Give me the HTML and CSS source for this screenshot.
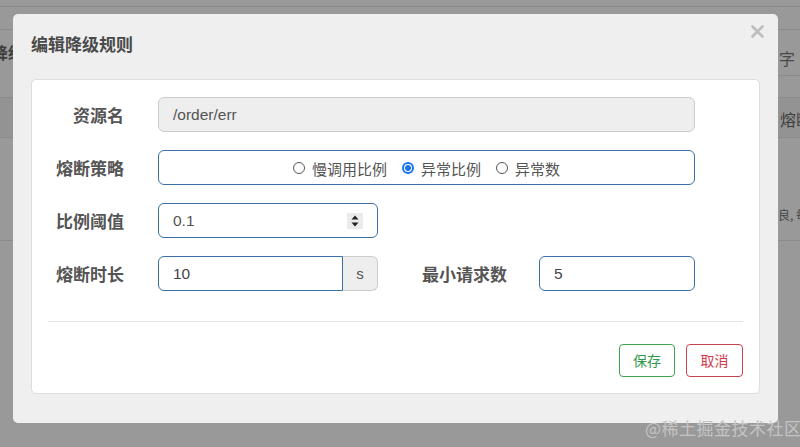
FILE: index.html
```html
<!DOCTYPE html>
<html lang="zh-CN">
<head>
<meta charset="utf-8">
<title>编辑降级规则</title>
<link rel="stylesheet" href="styles.css">
</head>
<body>
<div class="page">
  <div class="bgrow r0"></div>
  <div class="bgrow r1"></div>
  <div class="bgrow r2">
    <span class="bg-title">降级</span>
    <span class="bg-search">字</span>
  </div>
  <div class="bgrow r3">
    <span></span>
    <span class="bg-th">熔断</span>
  </div>
  <div class="bgrow r4">
    <span></span>
    <span class="bg-td">良, 每</span>
  </div>
  <div class="bgrow r5"></div>
</div>

<div class="modal">
  <div class="modal-header">
    <h3 class="modal-title">编辑降级规则</h3>
    <span class="close" aria-label="关闭">
      <svg width="13" height="13" viewBox="0 0 13 13"><path d="M1.5 1.5 L11.5 11.5 M11.5 1.5 L1.5 11.5" stroke="#bdbdbd" stroke-width="2.6" stroke-linecap="round"/></svg>
    </span>
  </div>
  <div class="card">
    <div class="form">
      <div class="row">
        <label class="label">资源名</label>
        <div class="field disabled w-full">/order/err</div>
      </div>
      <div class="row">
        <label class="label">熔断策略</label>
        <div class="field focus w-full radios">
          <label class="radio"><span class="dot"></span>慢调用比例</label>
          <label class="radio"><span class="dot checked"></span>异常比例</label>
          <label class="radio"><span class="dot"></span>异常数</label>
        </div>
      </div>
      <div class="row">
        <label class="label">比例阈值</label>
        <div class="field focus w-mid spin-field">
          <span class="val">0.1</span>
          <span class="spinner">
            <svg width="16" height="16" viewBox="0 0 16 16"><path d="M4.5 6.5 L8 2.5 L11.5 6.5 Z M4.5 9.5 L8 13.5 L11.5 9.5 Z" fill="#222"/></svg>
          </span>
        </div>
      </div>
      <div class="row">
        <label class="label">熔断时长</label>
        <div class="group">
          <div class="field focus grp-input"><span class="val dark">10</span></div>
          <span class="addon">s</span>
        </div>
        <label class="label label2">最小请求数</label>
        <div class="field focus w-small"><span class="val dark">5</span></div>
      </div>
    </div>
    <hr class="divider">
    <div class="actions">
      <button class="btn btn-save">保存</button>
      <button class="btn btn-cancel">取消</button>
    </div>
  </div>
</div>

<div class="watermark">@稀土掘金技术社区</div>
</body>
</html>
```

FILE: styles.css
```css
* { box-sizing: border-box; }
html, body {
  margin: 0;
  padding: 0;
  width: 800px;
  height: 447px;
  overflow: hidden;
}
body {
  background: #999999;
  font-family: "Liberation Sans", "Noto Sans CJK SC", sans-serif;
  color: #555;
  position: relative;
}

/* background page behind the overlay */
.page {
  display: flex;
  flex-direction: column;
}
.bgrow {
  display: flex;
  justify-content: space-between;
  border-bottom: 1px solid #8b8b8b;
}
.r0 { height: 7px; }
.r1 { height: 23px; }
.r2 { height: 68px; align-items: flex-start; }
.r3 { height: 40px; background: #939393; align-items: center; }
.r4 { height: 103px; align-items: flex-start; }
.r5 { border-bottom: none; }
.bg-title {
  margin-left: -8px;
  margin-top: 12px;
  font-family: "Noto Sans CJK SC", sans-serif;
  font-weight: 700;
  font-size: 16px;
  color: #3d3d3d;
  line-height: 20px;
}
.bg-search {
  width: 22px;
  height: 34px;
  margin-top: 12px;
  border-bottom: 1px solid #8b8b8b;
  font-family: "Noto Sans CJK SC", sans-serif;
  font-size: 16px;
  line-height: 32px;
  color: #4a4a4a;
  padding-left: 1px;
  overflow: hidden;
  white-space: nowrap;
}
.bg-th {
  width: 22px;
  font-family: "Noto Sans CJK SC", sans-serif;
  font-size: 16px;
  color: #3d3d3d;
  padding-left: 2px;
  overflow: hidden;
  white-space: nowrap;
  margin-top: 2px;
}
.bg-td {
  width: 22px;
  margin-top: 68px;
  font-family: "Noto Sans CJK SC", sans-serif;
  font-size: 12px;
  color: #444;
  overflow: hidden;
  white-space: nowrap;
}

/* modal */
.modal {
  position: absolute;
  left: 13px;
  top: 14px;
  width: 765px;
  height: 409px;
  background: #efefef;
  border-radius: 5px;
  display: flex;
  flex-direction: column;
}
.modal-header {
  height: 65px;
  display: flex;
  justify-content: space-between;
  align-items: flex-start;
  padding: 0 14px 0 18px;
}
.modal-title {
  margin: 20px 0 0;
  font-family: "Noto Sans CJK SC", sans-serif;
  font-weight: 700;
  font-size: 17px;
  line-height: 20px;
  color: #4a4a4a;
}
.close {
  margin-top: 11px;
  width: 13px;
  height: 13px;
  display: block;
}
.close svg { display: block; }

.card {
  margin: 0 18px;
  height: 315px;
  background: #fff;
  border: 1px solid #dddddd;
  border-radius: 5px;
  padding: 17px 16px 0;
  display: flex;
  flex-direction: column;
}
.form {
  display: flex;
  flex-direction: column;
  gap: 18px;
}
.row {
  display: flex;
  align-items: center;
  height: 35px;
}
.label {
  width: 93px;
  flex: none;
  margin-left: -17px;
  margin-right: 34px;
  text-align: right;
  font-family: "Noto Sans CJK SC", sans-serif;
  font-weight: 700;
  font-size: 17px;
  color: #555;
  line-height: 24px;
}
.label2 {
  width: 86px;
  margin-left: 43px;
  margin-right: 32px;
}
.field {
  height: 35px;
  border: 1px solid #cccccc;
  border-radius: 6px;
  display: flex;
  align-items: center;
  padding: 0 14px;
  font-size: 15.5px;
  color: #555;
  background: #fff;
}
.field.focus { border-color: #3b6fa5; }
.field.disabled { background: #eeeeee; }
.w-full { width: 537px; }
.w-mid { width: 220px; }
.w-small { width: 156px; }
.val.dark { color: #444; }

.radios {
  justify-content: center;
  font-family: "Noto Sans CJK SC", sans-serif;
  font-size: 15px;
  color: #555;
  gap: 15px;
  padding-top: 1px;
}
.radio {
  display: flex;
  align-items: center;
  gap: 7px;
}
.dot {
  width: 12px;
  height: 12px;
  border: 1px solid #555;
  border-radius: 50%;
  background: #fff;
  display: block;
}
.dot.checked {
  border: 2px solid #1a73e8;
  background: radial-gradient(circle, #1a73e8 0 2.6px, #fff 3.2px);
}

.spin-field { justify-content: space-between; }
.spinner {
  width: 16px;
  height: 16px;
  background: #ebebeb;
  display: block;
}
.spinner svg { display: block; }

.group {
  display: flex;
  width: 220px;
  flex: none;
}
.grp-input {
  width: 185px;
  border-radius: 6px 0 0 6px;
}
.addon {
  width: 35px;
  height: 35px;
  background: #eeeeee;
  border: 1px solid #cccccc;
  border-left: none;
  border-radius: 0 6px 6px 0;
  display: flex;
  align-items: center;
  justify-content: center;
  font-size: 15px;
  color: #555;
}

.divider {
  margin: 30px 0 0;
  border: none;
  border-top: 1px solid #e3e3e3;
  height: 0;
}
.actions {
  margin-top: 22px;
  display: flex;
  justify-content: flex-end;
  gap: 11px;
}
.btn {
  height: 33px;
  padding: 0;
  background: #fff;
  border-radius: 4px;
  font-family: "Noto Sans CJK SC", sans-serif;
  font-size: 14px;
  line-height: 31px;
  cursor: pointer;
}
.btn-save {
  width: 56px;
  border: 1px solid #3ca552;
  color: #2f9a46;
}
.btn-cancel {
  width: 57px;
  border: 1px solid #c9404e;
  color: #d33a4b;
}

.watermark {
  position: absolute;
  left: 645px;
  top: 416px;
  font-family: "Noto Sans CJK SC", sans-serif;
  font-size: 17px;
  line-height: 24px;
  color: #c4c4c4;
  letter-spacing: 0.5px;
  white-space: nowrap;
}
```
